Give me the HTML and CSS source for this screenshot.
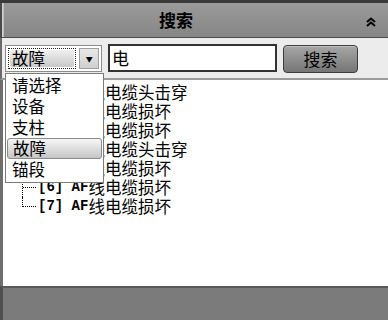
FILE: index.html
```html
<!DOCTYPE html>
<html lang="zh">
  <head>
    <meta charset="UTF-8" />
    <title>搜索</title>
    <link rel="stylesheet" href="styles.css">
  </head>
  <body>
    <div class="panel">
      <div class="panel-header">
        <span class="panel-title">搜索</span>
        <span class="collapse-btn">
          <svg width="10" height="10" viewBox="0 0 10 10">
            <path d="M1 5 L5 1.5 L9 5 M1 9 L5 5.5 L9 9" fill="none" stroke="#000" stroke-width="2" />
          </svg>
        </span>
      </div>

      <div class="toolbar">
        <div class="select-wrap">
          <div class="select-header">
            <div class="select-value"><span>故障</span></div>
            <div class="select-arrow">▼</div>
          </div>
          <div class="dropdown-list">
            <div class="dropdown-list-item">请选择</div>
            <div class="dropdown-list-item">设备</div>
            <div class="dropdown-list-item">支柱</div>
            <div class="dropdown-list-item active">故障</div>
            <div class="dropdown-list-item">锚段</div>
          </div>
        </div>
        <div class="search-input">电</div>
        <button class="search-btn">搜索</button>
      </div>

      <div class="results">
        <div class="tree-row"><span class="branch"><span></span></span><span class="code">[1] AF</span>线电缆头击穿</div>
        <div class="tree-row"><span class="branch"><span></span></span><span class="code">[2] AF</span>线电缆损坏</div>
        <div class="tree-row"><span class="branch"><span></span></span><span class="code">[3] AF</span>线电缆损坏</div>
        <div class="tree-row"><span class="branch"><span></span></span><span class="code">[4] AF</span>线电缆头击穿</div>
        <div class="tree-row"><span class="branch"><span></span></span><span class="code">[5] AF</span>线电缆损坏</div>
        <div class="tree-row"><span class="branch"><span></span></span><span class="code">[6] AF</span>线电缆损坏</div>
        <div class="tree-row last"><span class="branch"><span></span></span><span class="code">[7] AF</span>线电缆损坏</div>
      </div>

      <div class="panel-footer"></div>
    </div>
  </body>
</html>
```

FILE: styles.css
```css
body {
  margin: 0;
  font-family: "Noto Sans CJK SC", "Noto Sans", sans-serif;
  background: #7b7b7b;
}

.panel {
  width: 388px;
  height: 320px;
  display: flex;
  flex-direction: column;
  border-top: 3px solid #3a3a3a;
  box-sizing: border-box;
}

.panel-header {
  height: 34px;
  display: flex;
  align-items: center;
  background: linear-gradient(#9a9a9a, #868686);
  border-left: 2px solid #4a4a4a;
  box-shadow: inset 1px 0 0 #d0d0d0, inset 2px 0 0 #bdbdbd;
  border-bottom: 1px solid #4c4c4c;
}

.panel-title {
  flex: 1;
  text-align: center;
  font-size: 17px;
  font-weight: bold;
  color: #000;
  line-height: 34px;
}

.collapse-btn {
  width: 38px;
  display: flex;
  justify-content: center;
  padding-top: 3px;
  padding-left: 4px;
  box-sizing: border-box;
}

.toolbar {
  height: 42px;
  display: flex;
  align-items: flex-start;
  gap: 6px;
  padding: 6px 0 0 5px;
  box-sizing: border-box;
  background: #ececec;
  border-left: 2px solid #6a6a6a;
  border-bottom: 2px solid #9a9a9a;
  position: relative;
  z-index: 2;
}

.select-wrap {
  position: relative;
  margin-top: 1px;
  margin-left: -2px;
}

.select-header {
  width: 97px;
  height: 27px;
  display: flex;
  align-items: center;
  gap: 3px;
  padding: 0 2px;
  box-sizing: border-box;
  background: #fff;
  border: 1px solid #8c8c8c;
}

.select-value {
  width: 70px;
  height: 21px;
  border: 1px dotted #222;
  box-sizing: border-box;
  padding: 1px;
}

.select-value span {
  display: block;
  height: 17px;
  line-height: 17px;
  padding-left: 2px;
  font-size: 16.5px;
  background: linear-gradient(#f0f0f0, #c8c8c8);
  border-radius: 2px;
}

.select-arrow {
  width: 20px;
  height: 21px;
  display: flex;
  align-items: center;
  justify-content: center;
  font-size: 7px;
  color: #000;
  background: linear-gradient(#e8e8e8, #d0d0d0);
  border: 1px solid #a0a0a0;
  box-sizing: border-box;
}

.dropdown-list {
  position: absolute;
  top: 100%;
  left: 0;
  width: 99px;
  margin-top: 1px;
  padding: 1px 0 2px;
  background: #fff;
  border: 1px solid #7a7a7a;
  box-sizing: border-box;
  z-index: 10;
}

.dropdown-list-item {
  height: 21px;
  line-height: 21px;
  padding-left: 6px;
  font-size: 16.5px;
  color: #000;
}

.dropdown-list-item.active {
  margin: 0 1px;
  padding-left: 5px;
  border: 1px solid #8a8a8a;
  border-radius: 3px;
  height: 19px;
  line-height: 19px;
  background: linear-gradient(#f6f6f6, #c6c6c6);
}

.search-input {
  width: 169px;
  height: 28px;
  border: 2px solid #333;
  box-sizing: border-box;
  background: #fff;
  padding-left: 2px;
  font-size: 17px;
  line-height: 24px;
  color: #000;
}

.search-btn {
  width: 75px;
  height: 28px;
  margin-top: 1px;
  border: 1px solid #3c3c3c;
  border-radius: 4px;
  background: linear-gradient(#a6a6a6, #767676);
  box-shadow: inset 0 1px 0 #c4c4c4;
  font-family: "Noto Sans CJK SC", sans-serif;
  font-size: 17px;
  color: #000;
  padding: 0;
  line-height: 26px;
}

.results {
  flex: 1;
  background: #fff;
  border-left: 3px solid #6e6e6e;
  padding: 3px 0 0 19px;
}

.tree-row {
  height: 19px;
  display: flex;
  align-items: center;
  font-size: 16.5px;
  line-height: 19px;
  color: #000;
  white-space: nowrap;
}

.branch {
  width: 14px;
  align-self: stretch;
  border-left: 1px dotted #000;
  margin-right: 2px;
  box-sizing: border-box;
}

.branch span {
  display: block;
  height: 10px;
  border-bottom: 1px dotted #000;
  box-sizing: border-box;
}

.tree-row.last .branch {
  border-left: none;
}

.tree-row.last .branch span {
  border-left: 1px dotted #000;
}

.code {
  font-family: "Liberation Mono", monospace;
  font-size: 14px;
  font-weight: bold;
  white-space: pre;
}

.panel-footer {
  height: 34px;
  background: #7b7b7b;
  border-top: 2px solid #5a5a5a;
  border-left: 3px solid #4e4e4e;
  box-sizing: border-box;
}
```
